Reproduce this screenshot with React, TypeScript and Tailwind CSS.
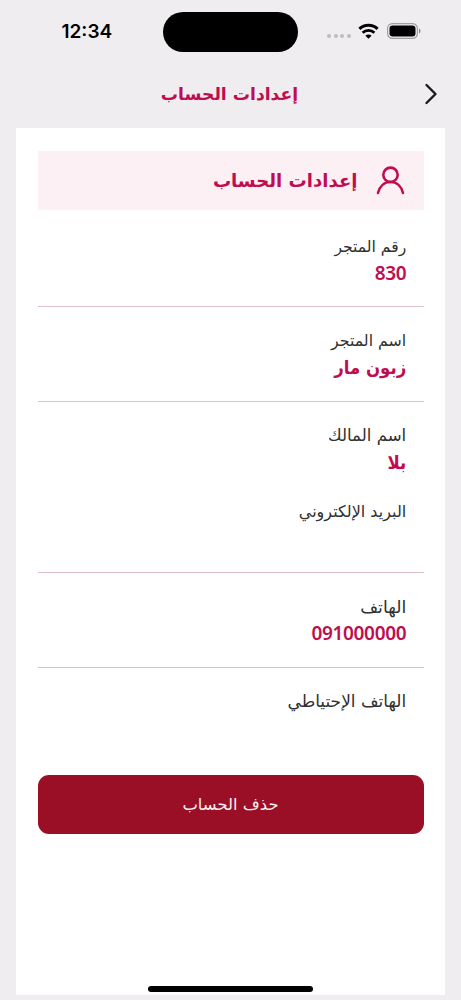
import React from "react";

const arabic = "font-['DejaVu_Sans',sans-serif]";
const arabicCondensed = "font-['DejaVu_Sans_Condensed','DejaVu_Sans',sans-serif] [font-stretch:condensed]";

function StatusBar() {
  return (
    <div dir="ltr" className="flex h-[63px] shrink-0 items-center">
      <div className="w-[163px] pl-[61.5px] font-[Inter,sans-serif] text-[19px] leading-[24px] font-semibold text-black">
        12:34
      </div>
      <div className="mt-[0.5px] h-[40px] w-[135px] rounded-full bg-black" />
      <div className="ml-[29px] mt-[9px] flex gap-[2.6px]">
        <i className="size-[4px] rounded-full bg-[#bdbbc0]" />
        <i className="size-[4px] rounded-full bg-[#bdbbc0]" />
        <i className="size-[4px] rounded-full bg-[#bdbbc0]" />
        <i className="size-[4px] rounded-full bg-[#bdbbc0]" />
      </div>
      <svg className="-mt-[2px] ml-[7.5px]" width="21" height="16" viewBox="0 0 21 16" fill="none" stroke="#000" strokeWidth="3">
        <path d="M1.4 5.9C6.5.9 14.5.9 19.6 5.9" />
        <path d="M4.6 9.7C7.9 6.5 13.1 6.5 16.4 9.7" strokeWidth="2.8" />
        <path d="M7.4 12.7C9.1 11 11.9 11 13.6 12.7L10.5 15.8Z" fill="#000" stroke="none" />
      </svg>
      <svg className="-mt-[1px] ml-[8px]" width="34" height="16" viewBox="0 0 34 16">
        <rect x=".6" y=".6" width="29.8" height="14.8" rx="4.8" fill="none" stroke="#a09ea3" strokeWidth="1.2" />
        <rect x="2.5" y="2.5" width="26" height="11" rx="3.2" fill="#000" />
        <path d="M32 5.6Q33.6 6.3 33.6 8T32 10.4Z" fill="#8c8a8e" />
      </svg>
    </div>
  );
}

function Label({ children, size }: { children: string; size: string }) {
  return (
    <div className={`${arabic} h-[27px] leading-[28px] whitespace-nowrap text-[#303030] ${size}`}>{children}</div>
  );
}

function Value({ children }: { children: string }) {
  return (
    <div className={`${arabicCondensed} h-[27px] text-[18.4px] leading-[27px] font-bold whitespace-nowrap text-[#c00d4f]`}>
      {children}
    </div>
  );
}

function NumberValue({ children }: { children: string }) {
  return (
    <div className="h-[27px] font-['Noto_Sans',sans-serif] text-[19px] leading-[27px] font-semibold tracking-[-0.35px] text-[#c00d4f]">
      {children}
    </div>
  );
}

export default function App() {
  return (
    <div dir="rtl" className="flex h-[1000px] w-[461px] flex-col overflow-hidden bg-[#efedf0]">
      <StatusBar />
      <header className="flex h-[65px] shrink-0 items-center px-[22px]">
        <svg className="-mt-[4px]" width="16" height="24" viewBox="0 0 16 24" fill="none" stroke="#1b1b1f" strokeWidth="2.4" strokeLinecap="round" strokeLinejoin="round">
          <path d="M3.5 3L12.5 12L3.5 21" />
        </svg>
        <h1 className={`${arabic} -mt-[4px] flex-1 pl-[14px] text-center text-[17.2px] leading-[28px] font-bold text-[#c00d4f]`}>
          إعدادات الحساب
        </h1>
      </header>

      <main className="mx-[16px] flex h-[867px] shrink-0 flex-col bg-white px-[21.5px] pt-[23px]">
        <section className="flex h-[59px] shrink-0 items-center bg-[#fdf0f5] pr-[19px]">
          <svg width="29" height="29" viewBox="0 0 29 29" fill="none" stroke="#c00d4f" strokeWidth="2.6" strokeLinecap="round">
            <circle cx="14.5" cy="8.8" r="7.2" />
            <path d="M2 27C3.6 20 8.4 16 14.5 16S25.4 20 27 27" />
          </svg>
          <h2 className={`${arabic} mr-[18px] text-[18.1px] leading-[28px] font-bold text-[#c00d4f]`}>إعدادات الحساب</h2>
        </section>

        <div className="h-[97px] shrink-0 border-b border-[#dfbfc9] pt-[23px] pr-[17.3px]">
          <Label size="text-[15.6px]">رقم المتجر</Label>
          <NumberValue>830</NumberValue>
        </div>
        <div className="h-[94.5px] shrink-0 border-b border-[#dfbfc9] pt-[20px] pr-[17.3px]">
          <Label size="text-[15.8px]">اسم المتجر</Label>
          <Value>زبون مار</Value>
        </div>
        <div className="h-[171.5px] shrink-0 border-b border-[#dfbfc9] pt-[20px] pr-[17.3px]">
          <Label size="text-[16.6px]">اسم المالك</Label>
          <Value>بلا</Value>
          <div className="mt-[22px]">
            <Label size="text-[16px]">البريد الإلكتروني</Label>
          </div>
        </div>
        <div className="h-[94.5px] shrink-0 border-b border-[#dfbfc9] pt-[20px] pr-[17.3px]">
          <Label size="text-[17.3px]">الهاتف</Label>
          <NumberValue>091000000</NumberValue>
        </div>
        <div className="h-[107.5px] shrink-0 pt-[19px] pr-[17.3px]">
          <Label size="text-[17px]">الهاتف الإحتياطي</Label>
        </div>
        <button className={`${arabic} h-[59px] shrink-0 rounded-[11px] bg-[#9b0f26] pt-[2px] text-[16.4px] text-[#faeef0]`}>
          حذف الحساب
        </button>
        <div className="mt-auto mb-[3.5px] h-[5.5px] w-[165px] shrink-0 self-center rounded-full bg-black" />
      </main>
    </div>
  );
}
